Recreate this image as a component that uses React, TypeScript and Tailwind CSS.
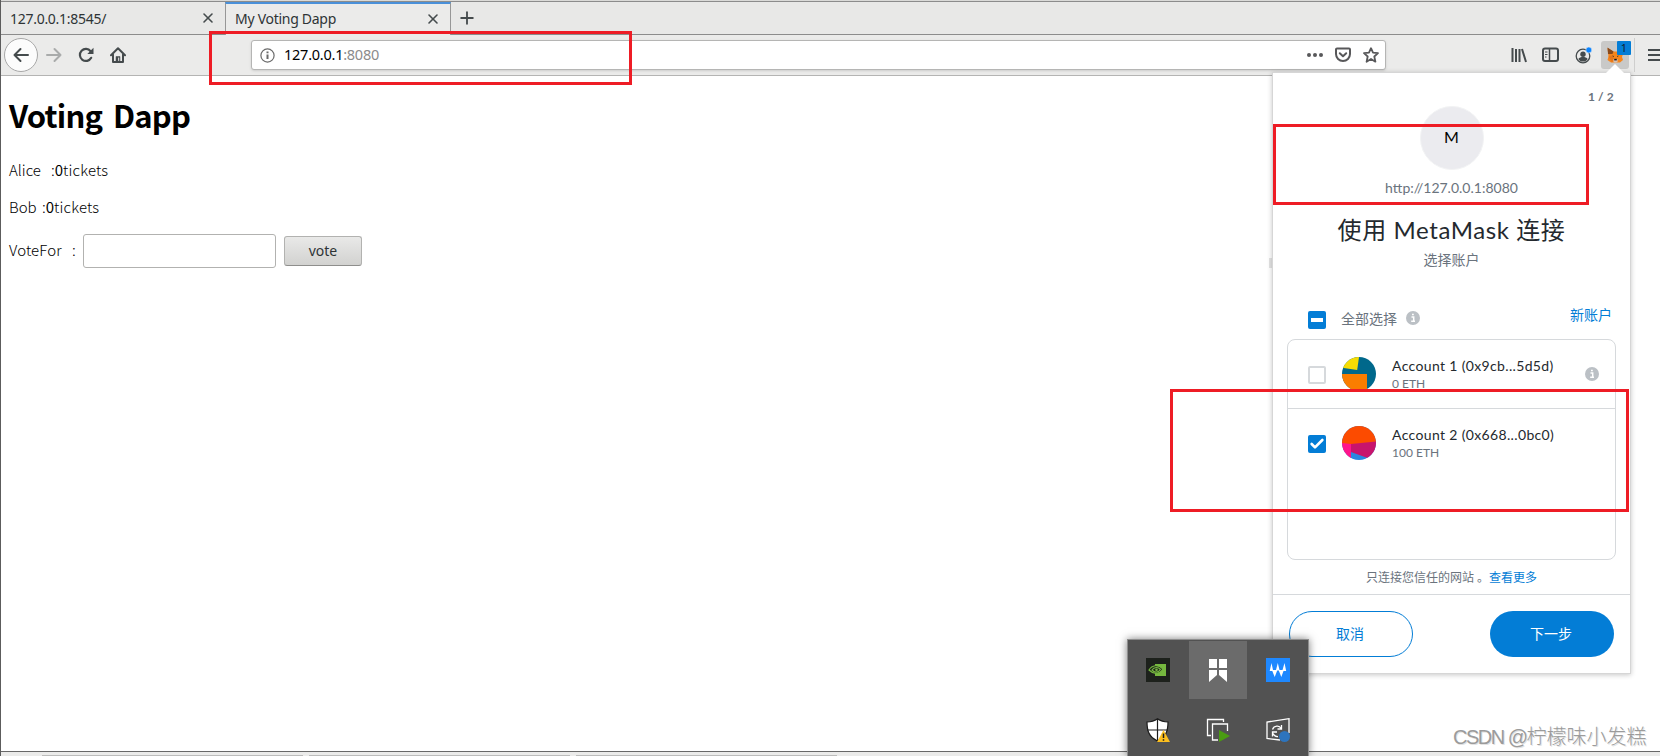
import React from 'react';
import { Check, Plus, X } from 'lucide-react';

interface TabProps {
  title: string;
  active?: boolean;
}

function Tab({ title, active = false }: TabProps) {
  return (
    <div
      className={
        active
          ? 'flex h-[33px] w-[226px] items-center justify-between border-x border-t-2 border-x-[#979797] border-t-[#4a90d9] bg-[#ebebea] pr-[9px] pb-[2px] pl-[9px]'
          : 'flex h-[33px] w-[224px] items-center justify-between border-b border-[#8c8c8c] pr-[9px] pl-[9px]'
      }
    >
      <span className="text-[14px] tracking-[-0.28px] whitespace-nowrap text-[#2e3436]">{title}</span>
      <X className="h-4 w-4 text-[#454b4d]" strokeWidth={2.4} />
    </div>
  );
}

function TabBar() {
  return (
    <div className="flex h-[35px] border-t border-[#dadad8] bg-[#e8e8e7]">
      <div className="flex flex-1 border-t border-[#8c8c8c]">
        <Tab title="127.0.0.1:8545/" />
        <Tab title="My Voting Dapp" active />
        <div className="flex h-[33px] flex-1 items-center border-b border-[#8c8c8c] pl-[6px]">
          <Plus className="h-5 w-5 text-[#454b4d]" strokeWidth={2.2} />
        </div>
      </div>
    </div>
  );
}

function BackIcon() {
  return (
    <svg width="16" height="16" viewBox="0 0 16 16" fill="none" stroke="currentColor" strokeWidth="2" strokeLinecap="round" strokeLinejoin="round">
      <path d="M15 8H1.5M7.5 2L1.5 8l6 6" />
    </svg>
  );
}

function ForwardIcon() {
  return (
    <svg width="16" height="16" viewBox="0 0 16 16" fill="none" stroke="currentColor" strokeWidth="2" strokeLinecap="round" strokeLinejoin="round">
      <path d="M1 8h13.5M8.5 2l6 6-6 6" />
    </svg>
  );
}

function ReloadIcon() {
  return (
    <svg width="16" height="16" viewBox="0 0 16 16" fill="none" stroke="currentColor" strokeWidth="2.2">
      <path d="M13.2 10.8A6 6 0 1 1 12.6 4.2" strokeLinecap="round" />
      <path d="M15.5 0.8v6.2H9.3z" fill="currentColor" stroke="none" />
    </svg>
  );
}

function HomeIcon() {
  return (
    <svg width="16" height="16" viewBox="0 0 16 16" fill="none" stroke="currentColor" strokeWidth="2" strokeLinejoin="round" strokeLinecap="round">
      <path d="M1 8.3L8 1.3l7 7M3 7.5V15h10V7.5" />
      <path d="M6 15V9.5h4V15z" fill="currentColor" strokeWidth="0.5" />
      <path d="M8.7 11v2.5" stroke="#ebebea" strokeWidth="1" />
    </svg>
  );
}

function FoxIcon() {
  return (
    <svg width="17" height="16" viewBox="0 0 17 16">
      <path d="M0.5 1l6 3.5H11l5-3.5v6l-1 3 1 3-3 2.5H4L0.5 13l1-3.5z" fill="#f6851b" />
      <path d="M0.5 0.5L6.500 4.5 5.5 7 1 7z" fill="#8a4a1b" />
      <path d="M1.5 9.5l4-1L7 12.5l-2 3z" fill="#e4761b" />
      <path d="M5 8.5l2 .5-.4 1.2zM12 8.5l-2 .5.4 1.2z" fill="#4a3a30" />
      <path d="M6.5 12h4v2.5l-1 1h-2l-1-1z" fill="#d7c1b3" />
      <path d="M7.2 11.8h2.6v1.6H7.2z" fill="#161616" />
    </svg>
  );
}

function Toolbar() {
  return (
    <div className="flex h-[41px] items-center border-b border-[#b4b4b3] bg-[#ebebea] text-[#454b4d]">
      <div className="ml-[3px] flex h-[34px] w-[34px] items-center justify-center rounded-full border border-[#a8a8a8] bg-[#fcfcfc]">
        <BackIcon />
      </div>
      <div className="ml-[8px] text-[#a9abab]">
        <ForwardIcon />
      </div>
      <div className="ml-[16px]">
        <ReloadIcon />
      </div>
      <div className="ml-[16px]">
        <HomeIcon />
      </div>
      <div className="ml-[125px] flex h-[30px] w-[1135px] items-center rounded-[3px] border border-[#b5b5b4] bg-white pr-[6px] pl-[8px] text-[#58585a] shadow-sm">
        <svg width="15" height="15" viewBox="0 0 15 15" fill="none" stroke="#6b6b6b">
          <circle cx="7.5" cy="7.5" r="6.6" strokeWidth="1.2" />
          <path d="M7.5 6.5V11M7.5 3.5v1.700" strokeWidth="2" />
        </svg>
        <span className="ml-[9px] text-[14.5px] tracking-[-0.25px] text-black">
          127.0.0.1<span className="text-[#8b8b8b]">:8080</span>
        </span>
        <div className="ml-auto flex items-center gap-[12px]">
          <svg width="16" height="16" viewBox="0 0 16 16" fill="currentColor">
            <circle cx="2" cy="8" r="2" />
            <circle cx="8" cy="8" r="2" />
            <circle cx="14" cy="8" r="2" />
          </svg>
          <svg width="16" height="16" viewBox="0 0 16 16" fill="none" stroke="currentColor" strokeWidth="2" strokeLinecap="round" strokeLinejoin="round">
            <path d="M1 2.5a1 1 0 0 1 1-1h12a1 1 0 0 1 1 1V7A7 7 0 0 1 1 7z" />
            <path d="M4.8 6.2L8 9.2l3.2-3" />
          </svg>
          <svg width="16" height="16" viewBox="0 0 16 16" fill="none" stroke="currentColor" strokeWidth="1.8" strokeLinejoin="round">
            <path d="M8 1.2l2 4.5 5 .5-3.7 3.3 1.1 5.2L8 12l-4.400 2.7 1.100-5.2L1 6.2l5-.5z" />
          </svg>
        </div>
      </div>
      <svg className="ml-[125px]" width="16" height="16" viewBox="0 0 16 16" fill="none" stroke="currentColor" strokeWidth="2">
        <path d="M1.5 1v14M5 2v13M8.5 2v13M11 2l4 13" />
      </svg>
      <svg className="ml-[15px]" width="17" height="16" viewBox="0 0 17 16" fill="none" stroke="currentColor" strokeWidth="2">
        <rect x="1" y="1.5" width="15" height="12.5" rx="2" />
        <path d="M7.5 2v12" strokeWidth="1.5" />
        <path d="M3 5h2.5M3 7.5h2.5M3 10h1.5" strokeWidth="1" />
      </svg>
      <svg className="ml-[16px]" width="17" height="17" viewBox="0 0 17 17" fill="none">
        <circle cx="8" cy="9" r="6.8" stroke="currentColor" strokeWidth="1.3" />
        <circle cx="8" cy="7.3" r="2.7" fill="currentColor" />
        <path d="M3.3 12c1-1.5 2.7-2 4.7-2s3.7.5 4.7 2c-1 1.6-2.7 2.6-4.7 2.6S4.3 13.6 3.3 12z" fill="currentColor" />
        <circle cx="13.8" cy="3" r="3" fill="#0a84ff" stroke="#ebebea" strokeWidth="0.6" />
      </svg>
      <div className="relative ml-[9px] flex h-7 w-7 items-center justify-center rounded-[3px] bg-[#c9c9c8]">
        <FoxIcon />
        <span className="absolute top-0 right-[-2px] flex h-[14px] w-[14px] items-center justify-center rounded-[1px] bg-[#037dd6] text-[11px] text-[#10202c]">
          1
        </span>
      </div>
      <div className="ml-[5px] h-[34px] w-px bg-[#cfcfce]" />
      <svg className="ml-[13px] shrink-0" width="12" height="16" viewBox="0 0 12 16" stroke="currentColor" strokeWidth="2">
        <path d="M0 3h12M0 8h12M0 13h12" />
      </svg>
    </div>
  );
}

function VotingPage() {
  return (
    <main className="flex-1 bg-white pl-[8px] font-['Noto_Sans_CJK_SC',sans-serif] text-black">
      <h1 className="mt-[15px] text-[31px] leading-[48px] font-bold tracking-[-0.8px] [word-spacing:4.5px]">Voting Dapp</h1>
      <p className="mt-[19px] text-[15px] leading-6 font-light">
        <span className="inline-block w-[42px]">Alice</span>:<b>0</b>
        <span className="tracking-[0.15px]">tickets</span>
      </p>
      <p className="mt-[13px] text-[15px] leading-6 font-light">
        <span className="inline-block w-[33px]">Bob</span>:<b>0</b>
        <span className="tracking-[0.15px]">tickets</span>
      </p>
      <div className="mt-[15px] flex items-center text-[15px] font-light">
        <span className="mb-[2px] w-[63px] tracking-[0.1px]">VoteFor</span>
        <span className="mb-[2px] w-[11px]">:</span>
        <input className="h-[34px] w-[193px] rounded-[3px] border border-[#b2b2b0] bg-white outline-hidden" />
        <button className="ml-2 h-[30px] w-[78px] rounded-[3px] border border-[#b2b2b0] border-b-[#8e8e8c] bg-linear-to-b from-[#e9e9e8] to-[#d2d2d0] pb-[2px] font-['Noto_Sans',sans-serif] text-[14px] font-normal text-[#2e3436]">
          vote
        </button>
      </div>
    </main>
  );
}

function InfoDot() {
  return (
    <svg width="14" height="14" viewBox="0 0 14 14">
      <circle cx="7" cy="7" r="7" fill="#bbc0c5" />
      <path d="M5.5 6h2.200v4M5.2 10.300H9M6 3.5h1.8" stroke="white" strokeWidth="1.5" fill="none" />
    </svg>
  );
}

function AvatarOne() {
  return (
    <svg width="34" height="34" viewBox="0 0 34 34">
      <clipPath id="avatar-one">
        <circle cx="17" cy="17" r="17" />
      </clipPath>
      <g clipPath="url(#avatar-one)">
        <path d="M0 0h34v34H0z" fill="#00688b" />
        <path d="M0 0h17L15.2 13 0 10.7z" fill="#f5dc04" />
        <path d="M0 17h25v17H0z" fill="#fa7d00" />
      </g>
    </svg>
  );
}

function AvatarTwo() {
  return (
    <svg width="34" height="34" viewBox="0 0 34 34">
      <clipPath id="avatar-two">
        <circle cx="17" cy="17" r="17" />
      </clipPath>
      <g clipPath="url(#avatar-two)">
        <path d="M0 0h34v34H0z" fill="#2a87e0" />
        <path d="M9 17l25-2v20L9 26z" fill="#c8146c" />
        <path d="M0 17h9v17H0z" fill="#ff148c" />
        <path d="M0 0h34v15.5L9 18l-9-1z" fill="#fc4b00" />
      </g>
    </svg>
  );
}

interface AccountRowProps {
  name: string;
  balance: string;
  checked?: boolean;
  avatar: React.ReactNode;
}

function AccountRow({ name, balance, checked = false, avatar }: AccountRowProps) {
  return (
    <div className="flex h-[69px] items-center border-b border-[#d6d9dc] pr-[16px] pb-px pl-[20px] last:border-b-0">
      {checked ? (
        <span className="mt-[2px] flex h-[18px] w-[18px] items-center justify-center rounded-[2px] bg-[#037dd6]">
          <Check className="h-[16px] w-[16px] text-white" strokeWidth={4} />
        </span>
      ) : (
        <span className="mt-[2px] h-[18px] w-[18px] rounded-[2px] border-2 border-[#d6d9dc] bg-white" />
      )}
      <span className="ml-[16px]">{avatar}</span>
      <div className="ml-[16px] whitespace-nowrap">
        <div className="text-[14px] leading-[19px] tracking-[0.35px] text-[#24292e]">{name}</div>
        <div className="text-[12px] leading-[17px] text-[#6a737d]">{balance}</div>
      </div>
      {!checked && (
        <span className="ml-auto">
          <InfoDot />
        </span>
      )}
    </div>
  );
}

function WalletPopup() {
  return (
    <div className="absolute top-[72px] left-[1272px] h-[602px] w-[359px] border border-[#d6d6d6] bg-white font-[Lato,'Noto_Sans_CJK_SC',sans-serif] shadow-[0_1px_5px_rgba(0,0,0,0.22)]">
      <svg className="absolute top-[-9px] right-[5px]" width="20" height="10" viewBox="0 0 20 10">
        <path d="M0 10L10 0l10 10z" fill="white" />
      </svg>
      <div className="pt-[15px] pr-[16px] text-right text-[12px] leading-[18px] font-bold tracking-[0.15px] text-[#6a737d]">
        1 / 2
      </div>
      <div className="flex flex-col items-center">
        <div className="flex h-16 w-16 items-center justify-center rounded-full border border-[#f2f3f4] bg-[#ebebef] pb-[2px] text-[16px] text-black">
          M
        </div>
        <div className="mt-[8px] text-[14px] leading-5 text-[#6a737d]">http://127.0.0.1:8080</div>
        <h2 className="mt-[15px] text-[24px] leading-[34px] tracking-[0.6px] whitespace-nowrap text-[#24292e]">使用 MetaMask 连接</h2>
        <p className="mt-[3px] text-[14px] leading-5 text-[#6a737d]">选择账户</p>
      </div>
      <div className="mt-[37px] flex h-[22px] items-center pr-[18px] pl-[35px] text-[14px]">
        <span className="mt-[3px] flex h-[18px] w-[18px] items-center justify-center rounded-[2px] bg-[#037dd6]">
          <span className="h-[4px] w-[12px] bg-white" />
        </span>
        <span className="ml-[15px] text-[#6a737d]">全部选择</span>
        <span className="ml-[9px]">
          <InfoDot />
        </span>
        <span className="mb-[7px] ml-auto text-[#037dd6]">新账户</span>
      </div>
      <div className="mx-[14px] mt-[10px] h-[221px] rounded-lg border border-[#d6d9dc]">
        <AccountRow name="Account 1 (0x9cb...5d5d)" balance="0 ETH" avatar={<AvatarOne />} />
        <AccountRow name="Account 2 (0x668...0bc0)" balance="100 ETH" avatar={<AvatarTwo />} checked />
      </div>
      <p className="mt-[9px] h-[25px] text-center text-[12px] leading-[18px] whitespace-pre text-[#6a737d]">
        只连接您信任的网站 。<span className="text-[#037dd6]">查看更多</span>
      </p>
      <div className="flex justify-between border-t border-[#d6d9dc] px-4 pt-4 text-[14px]">
        <button className="h-[46px] w-[124px] rounded-full border border-[#037dd6] bg-white pr-[2px] pb-[2px] text-[#037dd6]">取消</button>
        <button className="h-[46px] w-[124px] rounded-full bg-[#037dd6] pr-[2px] pb-[2px] text-white">下一步</button>
      </div>
    </div>
  );
}

function NvidiaIcon() {
  return (
    <svg width="24" height="24" viewBox="0 0 24 24" fill="none">
      <path d="M0 0h24v24H0z" fill="#1d211c" />
      <path d="M9 6h11v12H9z" fill="#76b83f" />
      <path d="M3 12c3-5 9-6 14-1-3 5-9 6-14 1z" fill="#1d211c" stroke="#76b83f" strokeWidth="1.2" />
      <path d="M6 12c2-3 6-3.500 8.500-.5C12 15 8.500 15 6 12z" stroke="#76b83f" strokeWidth="1.2" />
      <circle cx="10.5" cy="11.8" r="1.3" fill="#76b83f" />
    </svg>
  );
}

function BookmarkGridIcon() {
  return (
    <svg width="24" height="24" viewBox="0 0 24 24" fill="white">
      <path d="M3 1h8v9H3zM13 1h8v9h-8zM3 12h8v5l-8 7zM13 12h8v12l-8-7z" />
    </svg>
  );
}

function WaveIcon() {
  return (
    <svg width="24" height="24" viewBox="0 0 24 24">
      <path d="M0 0h24v24H0z" fill="#1e88ff" />
      <path d="M5.500 5L7 12h3l1.800-7 1.700 7h3L18.500 5l1.700 8h-2.700L15.300 19 12.800 12.500h-1.600L8.700 19 6.300 13H3.700z" fill="white" />
    </svg>
  );
}

function ShieldIcon() {
  return (
    <svg width="24" height="24" viewBox="0 0 24 24">
      <path d="M11.5.8C8.5 3 5 4 1 4c0 9 2 15 10.5 19C20 19 22 13 22 4c-4 0-7.500-1-10.500-3.200z" fill="white" stroke="#1c1c1c" strokeWidth="1.2" />
      <path d="M11.500 1v22M1 12h21" stroke="#1c1c1c" strokeWidth="1.2" />
      <path d="M17.500 12L24 24H11z" fill="#fcbf1e" />
      <path d="M17.500 15.500V20M17.500 21.300v1.400" stroke="#1c1c1c" strokeWidth="1.5" />
    </svg>
  );
}

function StackPlayIcon() {
  return (
    <svg width="24" height="24" viewBox="0 0 24 24" fill="none">
      <path d="M5 17.5H1.500v-16h16V4" stroke="white" strokeWidth="1.3" />
      <path d="M12 22H6.500V6h15v7" stroke="white" strokeWidth="1.3" />
      <path d="M13 12l11 6-11 6z" fill="#4a9c12" />
    </svg>
  );
}

function SyncScreenIcon() {
  return (
    <svg width="24" height="24" viewBox="0 0 24 24" fill="none" stroke="white" strokeWidth="1.3">
      <path d="M14 22L1 20.500V4l22-3.300V15" />
      <path d="M6.500 11.500c1.500-4 7-4.500 8.500-1M15.500 7v4h-4" />
      <path d="M12 18.500c-2 .3-4-.8-5-3M6.500 18.500V14h4.500" />
      <circle cx="18.500" cy="18.500" r="5.500" fill="#2d74bd" stroke="none" />
    </svg>
  );
}

function TrayPopup() {
  return (
    <div className="absolute top-[639px] left-[1127px] grid h-[117px] w-[182px] grid-cols-3 grid-rows-[60px_60px] overflow-hidden border border-b-0 border-[#8e8e8e] bg-[#525252] shadow-[0_0_8px_rgba(0,0,0,0.5)]">
      <div className="flex items-center justify-center">
        <NvidiaIcon />
      </div>
      <div className="m-px flex items-center justify-center bg-[#6b6b6b]">
        <BookmarkGridIcon />
      </div>
      <div className="flex items-center justify-center">
        <WaveIcon />
      </div>
      <div className="flex items-center justify-center">
        <ShieldIcon />
      </div>
      <div className="flex items-center justify-center">
        <StackPlayIcon />
      </div>
      <div className="flex items-center justify-center">
        <SyncScreenIcon />
      </div>
    </div>
  );
}

export default function App() {
  return (
    <div className="relative flex h-[756px] w-[1660px] flex-col overflow-hidden border-l border-[#5c5c5c] bg-white font-['Noto_Sans',sans-serif]">
      <TabBar />
      <Toolbar />
      <VotingPage />
      <div className="flex h-[5px] items-end gap-[6px] border-t border-[#686868] bg-[#ebebea] pl-[41px]">
        <div className="h-px w-[261px] bg-[#bcbcbb]" />
        <div className="h-px w-[261px] bg-[#bcbcbb]" />
        <div className="h-px w-[261px] bg-[#bcbcbb]" />
      </div>

      {/* everything below floats above the browser window */}
      <div className="absolute inset-y-0 right-0 -left-px">
        <div className="absolute top-[258px] left-[1269px] h-[10px] w-[3px] bg-[#e4e4e4]" />
        <WalletPopup />
        <TrayPopup />
        <div className="absolute top-[31px] left-[209px] h-[54px] w-[423px] border-3 border-[#ee1c25]" />
        <div className="absolute top-[124px] left-[1273px] h-[81px] w-[316px] border-3 border-[#ee1c25]" />
        <div className="absolute top-[389px] left-[1170px] h-[123px] w-[459px] border-3 border-[#ee1c25]" />
        <div className="absolute top-[722px] left-[1453px] font-['Liberation_Sans','Noto_Sans_CJK_SC',sans-serif] text-[20px] leading-[30px] font-light whitespace-nowrap text-[#9b9b9b] [text-shadow:1px_1px_0_#e2e2e2]">
          <span className="tracking-[-1.5px]">CSDN @</span>柠檬味小发糕
        </div>
      </div>
    </div>
  );
}
